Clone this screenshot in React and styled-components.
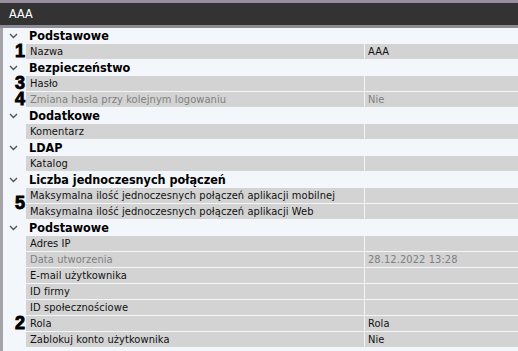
import React from "react";
import styled, { createGlobalStyle } from "styled-components";

const sections = [
    {
        title: "Podstawowe",
        rows: [{ name: "Nazwa", value: "AAA", mark: "1" }],
    },
    {
        title: "Bezpieczeństwo",
        rows: [
            { name: "Hasło", value: "", mark: "3" },
            { name: "Zmiana hasła przy kolejnym logowaniu", value: "Nie", mark: "4", disabled: true },
        ],
    },
    {
        title: "Dodatkowe",
        rows: [{ name: "Komentarz", value: "" }],
    },
    {
        title: "LDAP",
        rows: [{ name: "Katalog", value: "" }],
    },
    {
        title: "Liczba jednoczesnych połączeń",
        rows: [
            { name: "Maksymalna ilość jednoczesnych połączeń aplikacji mobilnej", value: "", mark: "5", span: true },
            { name: "Maksymalna ilość jednoczesnych połączeń aplikacji Web", value: "" },
        ],
    },
    {
        title: "Podstawowe",
        rows: [
            { name: "Adres IP", value: "" },
            { name: "Data utworzenia", value: "28.12.2022 13:28", disabled: true },
            { name: "E-mail użytkownika", value: "" },
            { name: "ID firmy", value: "" },
            { name: "ID społecznościowe", value: "" },
            { name: "Rola", value: "Rola", mark: "2" },
            { name: "Zablokuj konto użytkownika", value: "Nie" },
        ],
    },
];

const Chevron = () => (
    <svg width="9" height="6" viewBox="0 0 9 6">
        <polyline points="1,1 4.5,4.5 8,1" fill="none" stroke="#555" strokeWidth="1.4" />
    </svg>
);

const App = () => {
    return (
        <>
            <GlobalStyle />
            <Window>
                <TitleBar>AAA</TitleBar>
                <Body>
                    {sections.map((section, i) => (
                        <Section key={i}>
                            <Header>
                                <Toggle>
                                    <Chevron />
                                </Toggle>
                                {section.title}
                            </Header>
                            {section.rows.map((row, j) => (
                                <Row key={j}>
                                    <Gutter>
                                        {row.mark && <Mark $span={row.span}>{row.mark}</Mark>}
                                    </Gutter>
                                    <Name $disabled={row.disabled}>{row.name}</Name>
                                    <Value $disabled={row.disabled}>{row.value}</Value>
                                </Row>
                            ))}
                        </Section>
                    ))}
                </Body>
            </Window>
        </>
    );
};

const GlobalStyle = createGlobalStyle`
    html, body {
        margin: 0;
        padding: 0;
        background: #f3f6fb;
    }
`;

const Window = styled.div`
    width: 518px;
    height: 351px;
    display: flex;
    flex-direction: column;
    overflow: hidden;
    font-family: "DejaVu Sans Condensed", "DejaVu Sans", sans-serif;
    background: #f3f6fb;
`;

const TitleBar = styled.div`
    height: 22px;
    line-height: 22px;
    background: #333333;
    border-top: 3px solid #978f9f;
    border-bottom: 3px solid #8e8a96;
    color: #ffffff;
    font-size: 12.5px;
    padding-left: 9px;
`;

const Body = styled.div`
    flex: 1;
    border-left: 3px solid #a3a3a8;
    display: flex;
    flex-direction: column;
`;

const Section = styled.div`
    display: flex;
    flex-direction: column;
`;

const Header = styled.div`
    height: 15px;
    margin-bottom: 1px;
    display: flex;
    align-items: center;
    font-weight: bold;
    font-size: 12.5px;
    color: #000;
`;

const Toggle = styled.span`
    width: 26px;
    padding-left: 6px;
    box-sizing: border-box;
    display: flex;
    align-items: center;
`;

const Row = styled.div`
    display: grid;
    grid-template-columns: 22px 338px 1fr;
    column-gap: 1px;
    height: 15px;
    margin-bottom: 1px;
    font-size: 11px;
    letter-spacing: 0.08px;
    line-height: 15px;
`;

const Gutter = styled.div`
    position: relative;
`;

const Mark = styled.span`
    position: absolute;
    z-index: 1;
    right: 0;
    top: ${(p) => (p.$span ? "9px" : "1px")};
    font-family: "Liberation Sans", Arial, sans-serif;
    font-weight: bold;
    font-size: 18px;
    line-height: 13px;
    color: #000;
    -webkit-text-stroke: 0.9px #000;
`;

const Name = styled.div`
    background: #d3d3d3;
    padding-left: 4px;
    white-space: nowrap;
    overflow: hidden;
    color: ${(p) => (p.$disabled ? "#808080" : "#111")};
`;

const Value = styled(Name)`
    padding-left: 3px;
`;

export default App;
